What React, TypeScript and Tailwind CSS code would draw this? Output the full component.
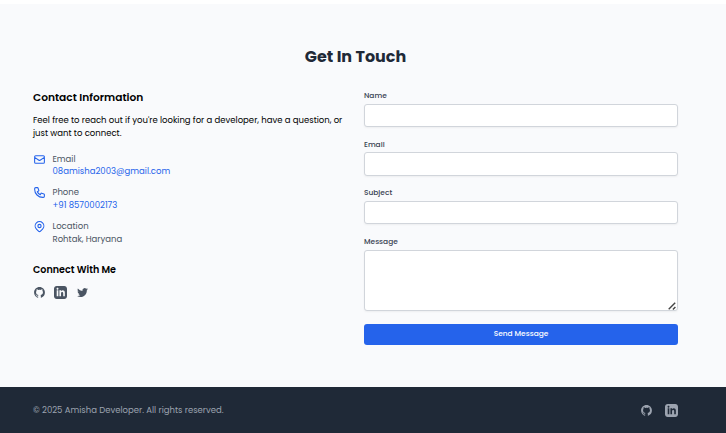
import type { ReactNode } from "react";

const GITHUB =
  "M12 2C6.477 2 2 6.484 2 12.017c0 4.425 2.865 8.18 6.839 9.504.5.092.682-.217.682-.483 0-.237-.008-.868-.013-1.703-2.782.605-3.369-1.343-3.369-1.343-.454-1.158-1.11-1.466-1.11-1.466-.908-.62.069-.608.069-.608 1.003.07 1.531 1.032 1.531 1.032.892 1.53 2.341 1.088 2.91.832.092-.647.35-1.088.636-1.338-2.22-.253-4.555-1.113-4.555-4.951 0-1.093.39-1.988 1.029-2.688-.103-.253-.446-1.272.098-2.65 0 0 .84-.27 2.75 1.026A9.564 9.564 0 0112 6.844c.85.004 1.705.115 2.504.337 1.909-1.296 2.747-1.027 2.747-1.027.546 1.379.202 2.398.1 2.651.64.7 1.028 1.595 1.028 2.688 0 3.848-2.339 4.695-4.566 4.943.359.309.678.92.678 1.855 0 1.338-.012 2.419-.012 2.747 0 .268.18.58.688.482A10.019 10.019 0 0022 12.017C22 6.484 17.522 2 12 2z";
const LINKEDIN =
  "M19 0h-14c-2.761 0-5 2.239-5 5v14c0 2.761 2.239 5 5 5h14c2.762 0 5-2.239 5-5v-14c0-2.761-2.238-5-5-5zm-11 19h-3v-11h3v11zm-1.5-12.268c-.966 0-1.75-.79-1.75-1.764s.784-1.764 1.75-1.764 1.75.79 1.75 1.764-.783 1.764-1.75 1.764zm13.5 12.268h-3v-5.604c0-3.368-4-3.113-4 0v5.604h-3v-11h3v1.765c1.396-2.586 7-2.777 7 2.476v6.759z";
const TWITTER =
  "M8.29 20.251c7.547 0 11.675-6.253 11.675-11.675 0-.178 0-.355-.012-.53A8.348 8.348 0 0022 5.92a8.19 8.19 0 01-2.357.646 4.118 4.118 0 001.804-2.27 8.224 8.224 0 01-2.605.996 4.107 4.107 0 00-6.993 3.743 11.65 11.65 0 01-8.457-4.287 4.106 4.106 0 001.27 5.477A4.072 4.072 0 012.8 9.713v.052a4.105 4.105 0 003.292 4.022 4.095 4.095 0 01-1.853.07 4.108 4.108 0 003.834 2.85A8.233 8.233 0 012 18.407a11.616 11.616 0 006.29 1.84";
const MAIL = [
  "M3 8l7.89 5.26a2 2 0 002.22 0L21 8M5 19h14a2 2 0 002-2V7a2 2 0 00-2-2H5a2 2 0 00-2 2v10a2 2 0 002 2z",
];
const PHONE = [
  "M3 5a2 2 0 012-2h3.28a1 1 0 01.948.684l1.498 4.493a1 1 0 01-.502 1.21l-2.257 1.13a11.042 11.042 0 005.516 5.516l1.13-2.257a1 1 0 011.21-.502l4.493 1.498a1 1 0 01.684.949V19a2 2 0 01-2 2h-1C9.716 21 3 14.284 3 6V5z",
];
const PIN = [
  "M17.657 16.657L13.414 20.9a1.998 1.998 0 01-2.827 0l-4.244-4.243a8 8 0 1111.314 0z",
  "M15 11a3 3 0 11-6 0 3 3 0 016 0z",
];

function Solid({ d }: { d: string }) {
  return (
    <svg viewBox="0 0 24 24" fill="currentColor" className="size-[13px] shrink-0">
      <path d={d} />
    </svg>
  );
}

function Detail({ icon, label, className, children }: { icon: string[]; label: string; className: string; children: ReactNode }) {
  return (
    <div className={`flex ${className}`}>
      <svg
        viewBox="0 0 24 24"
        fill="none"
        stroke="currentColor"
        strokeWidth={2}
        strokeLinecap="round"
        strokeLinejoin="round"
        className="mr-[6.5px] size-[13px] shrink-0 text-[#2563eb]"
      >
        {icon.map((d) => (
          <path key={d} d={d} />
        ))}
      </svg>
      <div className="text-[8.5px] leading-[13px] text-[#4b5563]">
        <p>{label}</p>
        {children}
      </div>
    </div>
  );
}

function Field({ label, className, inputClass }: { label: string; className: string; inputClass: string }) {
  return (
    <label className={`block ${className}`}>
      <span className="block text-[7.45px] leading-[9px] font-medium text-[#374151]">{label}</span>
      <input className={`block w-full rounded-[3px] border border-[#d1d5db] bg-white shadow-xs outline-none ${inputClass}`} />
    </label>
  );
}

export default function App() {
  return (
    <div className="h-[433px] w-[726px] overflow-hidden bg-white pt-1 font-['Poppins','Inter',sans-serif] text-black">
      <section className="h-[383px] bg-[#f9fafc] pt-[40px] pr-[48px] pl-[33px]">
        <h2 className="text-center text-[15.95px] leading-[26px] font-bold text-[#1f2937]">Get In Touch</h2>
        <div className="mt-[21px] grid grid-cols-2 gap-[17px]">
          <div>
            <h3 className="text-[10.63px] leading-[13px] font-semibold">Contact Information</h3>
            <p className="mt-[10px] text-[8.51px] leading-[13px] whitespace-nowrap">
              Feel free to reach out if you're looking for a developer, have a question, or
              <br />
              just want to connect.
            </p>
            <Detail icon={MAIL} label="Email" className="mt-[13px]">
              <p className="-mt-px text-[#2563eb]">08amisha2003@gmail.com</p>
            </Detail>
            <Detail icon={PHONE} label="Phone" className="mt-[8px]">
              <p className="text-[#2563eb]">+91 8570002173</p>
            </Detail>
            <Detail icon={PIN} label="Location" className="mt-[8px]">
              <p>Rohtak, Haryana</p>
            </Detail>
            <h4 className="mt-[17px] text-[9.57px] leading-[13px] font-semibold">Connect With Me</h4>
            <div className="mt-[10px] flex gap-[8.4px] text-[#4b5563]">
              <Solid d={GITHUB} />
              <Solid d={LINKEDIN} />
              <Solid d={TWITTER} />
            </div>
          </div>
          <form>
            <Field label="Name" className="" inputClass="mt-[4px] h-[23px]" />
            <Field label="Email" className="mt-[13px]" inputClass="mt-[3px] h-[24px]" />
            <Field label="Subject" className="mt-[12px]" inputClass="mt-[4px] h-[23px]" />
            <label className="mt-[13px] block">
              <span className="block text-[7.45px] leading-[9px] font-medium text-[#374151]">Message</span>
              <span className="relative mt-[4px] block">
                <textarea className="block h-[61px] w-full resize-none rounded-[3px] border border-[#d1d5db] bg-white shadow-xs outline-none" />
                <svg viewBox="0 0 8 8" className="absolute right-[2px] bottom-[1px] size-[8px]" fill="none" stroke="#444" strokeWidth="1.4">
                  <path d="M0.7 7.3L7.2 0.8M4.9 7.4L7.4 4.9" />
                </svg>
              </span>
            </label>
            <button
              type="button"
              className="mt-[13px] block h-[21px] w-full rounded-[3px] bg-[#2563eb] pb-[2px] text-[7.45px] leading-[19px] font-medium text-white"
            >
              Send Message
            </button>
          </form>
        </div>
      </section>
      <footer className="flex h-[46px] items-center justify-between bg-[#1f2937] pr-[48px] pl-[33px] text-[#9ca3af]">
        <p className="text-[8.51px] leading-[13px]">© 2025 Amisha Developer. All rights reserved.</p>
        <div className="flex gap-[12px]">
          <Solid d={GITHUB} />
          <Solid d={LINKEDIN} />
        </div>
      </footer>
    </div>
  );
}
